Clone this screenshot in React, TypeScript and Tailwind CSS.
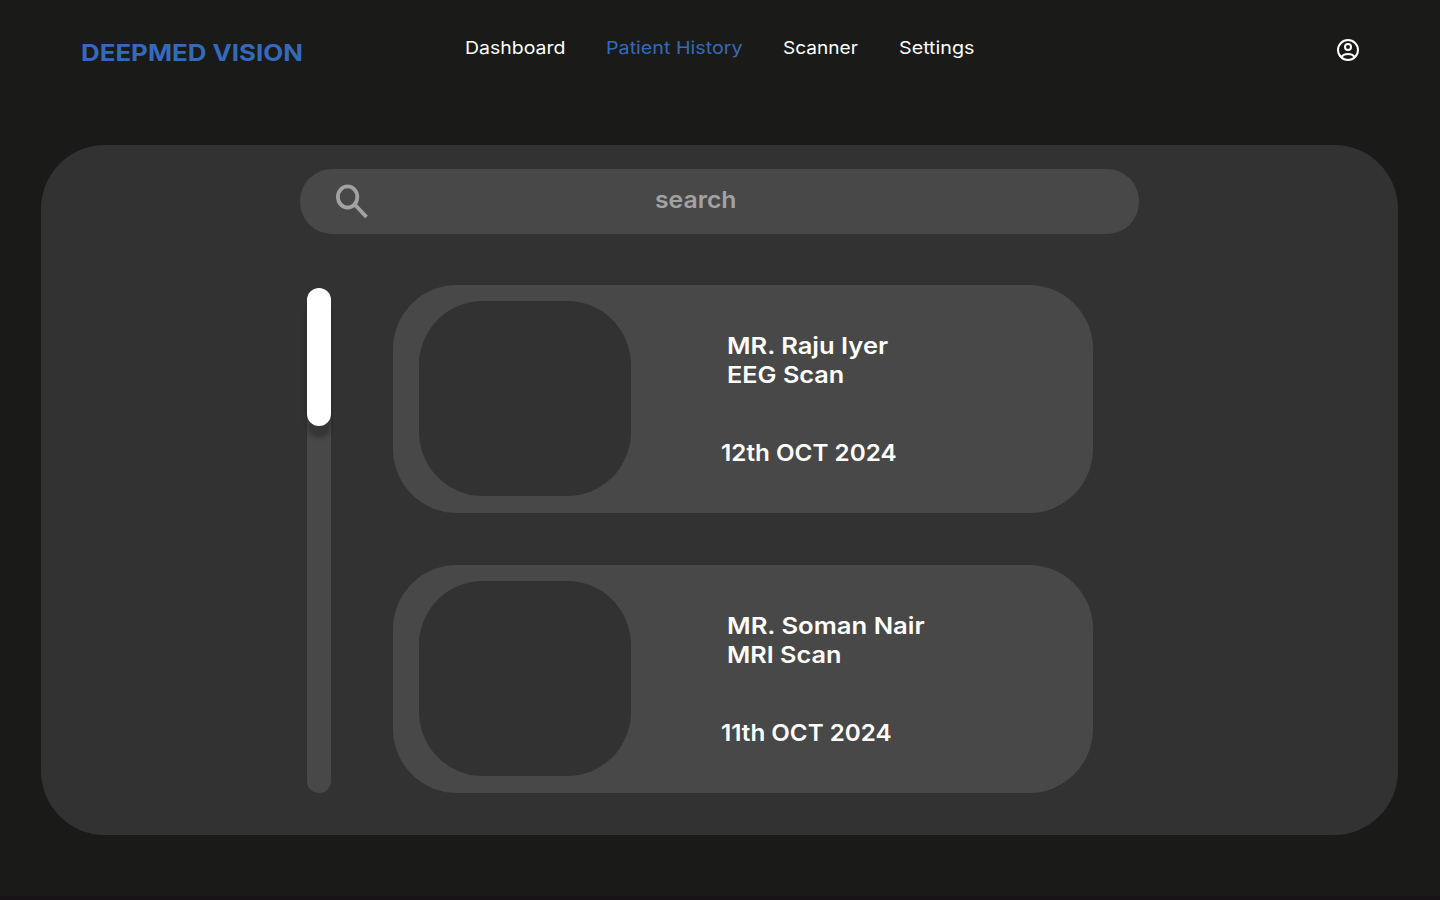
const navItems = [
  { label: 'Dashboard', className: 'w-[141px] text-white', labelClass: 'scale-x-[1.112]' },
  { label: 'Patient History', className: 'w-[177px] text-[#356abb]', labelClass: 'scale-x-[1.125]' },
  { label: 'Scanner', className: 'w-[116px] text-white', labelClass: 'scale-x-[1.09]' },
  { label: 'Settings', className: 'w-[90px] text-white', labelClass: 'scale-x-[1.127]' },
];

const records = [
  {
    name: 'MR. Raju Iyer',
    scan: 'EEG Scan',
    date: '12th OCT 2024',
    nameClass: 'scale-x-[1.109]',
    scanClass: 'scale-x-[1.099]',
    dateClass: 'scale-x-[1.055]',
  },
  {
    name: 'MR. Soman Nair',
    scan: 'MRI Scan',
    date: '11th OCT 2024',
    nameClass: 'scale-x-[1.114]',
    scanClass: 'scale-x-[1.098]',
    dateClass: 'scale-x-[1.051]',
  },
];

function Header() {
  return (
    <header className="flex h-[145px] items-start pl-[81px] pr-[80px]">
      <div className="w-[384px] shrink-0 pt-[39px]">
        <h1 className="inline-block origin-left scale-x-[1.125] whitespace-nowrap text-[23px] font-bold leading-[29px] text-[#356abb]">
          DEEPMED VISION
        </h1>
      </div>
      <nav className="flex pt-[37px] text-[17.5px] leading-[22px]">
        {navItems.map((item) => (
          <a key={item.label} className={`shrink-0 whitespace-nowrap ${item.className}`}>
            <span className={`inline-block origin-left ${item.labelClass}`}>{item.label}</span>
          </a>
        ))}
      </nav>
      <svg className="ml-auto mt-[38px] h-6 w-6" viewBox="0 0 24 24" fill="none" stroke="#fff" strokeWidth="2">
        <circle cx="12" cy="12" r="10" />
        <circle cx="12" cy="9" r="3" />
        <path d="M5.5 18.6C7 16.9 9.3 16 12 16s5 .9 6.500 2.600" />
      </svg>
    </header>
  );
}

function SearchBar() {
  return (
    <div className="ml-[259px] flex h-[65px] w-[839px] rounded-[32px] bg-[#484848]">
      <svg className="ml-[34px] mt-[13px] h-[38px] w-[38px] shrink-0" viewBox="0 0 38 38" fill="none" stroke="#a2a2a2">
        <ellipse cx="13.600" cy="15" rx="9.700" ry="10.600" strokeWidth="3.800" />
        <path d="M20.200 22 32.500 35" strokeWidth="3.900" />
      </svg>
      <span className="ml-[283px] mt-[17px] h-[29px] origin-left scale-x-[1.075] text-[23px] font-semibold leading-[29px] text-[#a2a2a2]">
        search
      </span>
    </div>
  );
}

function RecordCard({ record }: { record: (typeof records)[number] }) {
  return (
    <article className="flex h-[228px] w-[700px] rounded-[64px] bg-[#484848] pl-[26px] pt-[16px]">
      <div className="h-[195px] w-[212px] shrink-0 rounded-[64px] bg-[#323232]" />
      <div className="ml-[90px] mt-[31px] whitespace-nowrap text-[23px] font-semibold leading-[29px] text-white">
        <p className="h-[29px] pl-[6px]">
          <span className={`inline-block origin-left ${record.nameClass}`}>{record.name}</span>
        </p>
        <p className="h-[29px] pl-[6px]">
          <span className={`inline-block origin-left ${record.scanClass}`}>{record.scan}</span>
        </p>
        <p className="mt-[49px] h-[29px]">
          <span className={`inline-block origin-left ${record.dateClass}`}>{record.date}</span>
        </p>
      </div>
    </article>
  );
}

export default function App() {
  return (
    <div className="flex h-[900px] w-[1440px] flex-col overflow-hidden border-b-4 border-[#171316] bg-[#1a1a18] font-['Inter',sans-serif]">
      <Header />
      <main className="ml-[41px] h-[690px] w-[1357px] shrink-0 rounded-[64px] bg-[#323232] pt-[24px]">
        <SearchBar />
        <div className="mt-[51px] flex pl-[266px]">
          <div className="mt-[3px] h-[505px] w-[24px] rounded-[12px] bg-[#484848]">
            <div className="h-[138px] w-[24px] rounded-[12px] bg-white shadow-[0_12px_4px_rgba(0,0,0,0.25)]" />
          </div>
          <div className="ml-[62px] flex flex-col gap-[52px]">
            {records.map((record) => (
              <RecordCard key={record.name} record={record} />
            ))}
          </div>
        </div>
      </main>
    </div>
  );
}
